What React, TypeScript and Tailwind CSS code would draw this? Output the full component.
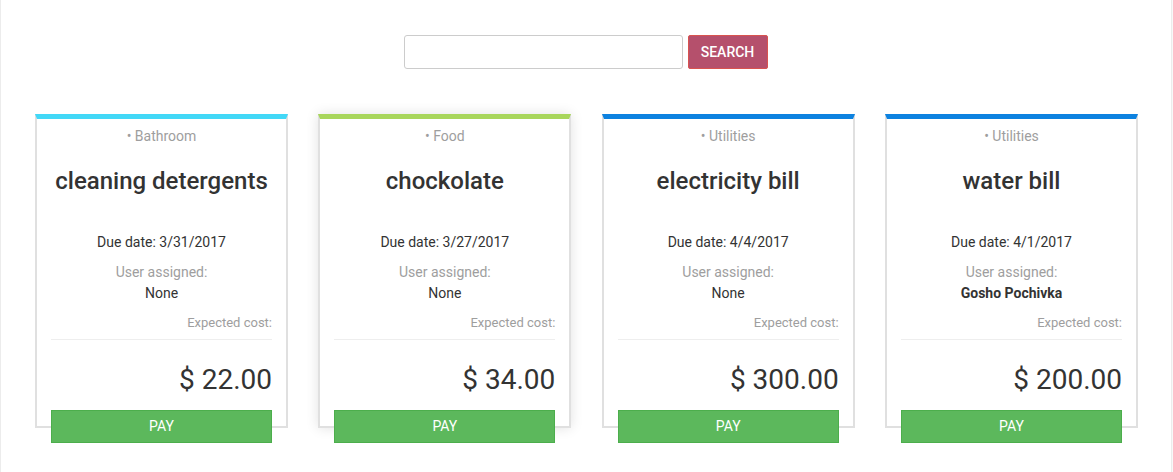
import React from 'react';

interface Bill {
  category: string;
  title: string;
  due: string;
  user: string;
  cost: string;
  color: string;
  hovered?: boolean;
}

const bills: Bill[] = [
  { category: 'Bathroom', title: 'cleaning detergents', due: '3/31/2017', user: 'None', cost: '22.00', color: 'border-t-[#42d8f7]' },
  { category: 'Food', title: 'chockolate', due: '3/27/2017', user: 'None', cost: '34.00', color: 'border-t-[#a8d65c]', hovered: true },
  { category: 'Utilities', title: 'electricity bill', due: '4/4/2017', user: 'None', cost: '300.00', color: 'border-t-[#0d82e0]' },
  { category: 'Utilities', title: 'water bill', due: '4/1/2017', user: 'Gosho Pochivka', cost: '200.00', color: 'border-t-[#0d82e0]' },
];

const BillCard: React.FC<{ bill: Bill }> = ({ bill }) => (
  <div
    className={`h-[314px] border-x-2 border-b-2 border-t-[5px] border-[#e0e0e0] bg-white px-[14px] text-center ${bill.color} ${
      bill.hovered ? 'shadow-[0_0_12px_rgba(0,0,0,0.12)]' : ''
    }`}
  >
    <div className="mt-[7px] text-[14px] leading-[20px] text-[#9e9e9e]">• {bill.category}</div>
    <h3 className="mt-[20px] whitespace-nowrap text-[24px] leading-[30px] font-medium text-[#333]">{bill.title}</h3>
    <div className="mt-[36px] text-[14px] leading-[20px] text-[#333]">Due date: {bill.due}</div>
    <div className="mt-[10px] text-[14px] leading-[20px] text-[#9e9e9e]">User assigned:</div>
    <div className={`mt-px text-[14px] leading-[20px] text-[#333] ${bill.user !== 'None' ? 'font-bold' : ''}`}>{bill.user}</div>
    <div className="mt-[11px] border-b border-[#eeeeee] pb-[7px] text-right text-[13px] leading-[18px] text-[#9e9e9e]">
      Expected cost:
    </div>
    <div className="mt-[23px] text-right text-[28px] leading-[34px] text-[#333]">$ {bill.cost}</div>
    <button className="mt-[13px] h-[33px] w-full border border-[#4cae4c] bg-[#5cb85c] text-[14px] text-white">PAY</button>
  </div>
);

export default function App() {
  return (
    <div className="flex min-h-[472px] bg-[#f8f8f8] font-['Roboto','Liberation_Sans',sans-serif]">
      <div className="min-h-[472px] w-[1172px] border-x border-[#ececec] bg-white">
        <div className="mt-[35px] flex justify-center gap-[5px] pr-[1px]">
          <input className="h-[34px] w-[279px] rounded-[3px] border border-[#cccccc] px-3 text-[14px] outline-none" />
          <button className="h-[34px] w-[80px] rounded-[2px] border border-[#d9534f] bg-[#b5506c] text-[14px] font-medium text-white">
            SEARCH
          </button>
        </div>
        <div className="mt-[45px] grid grid-cols-4 gap-[30.33px] pl-[34px] pr-[33px]">
          {bills.map((b) => (
            <BillCard key={b.title} bill={b} />
          ))}
        </div>
      </div>
    </div>
  );
}
